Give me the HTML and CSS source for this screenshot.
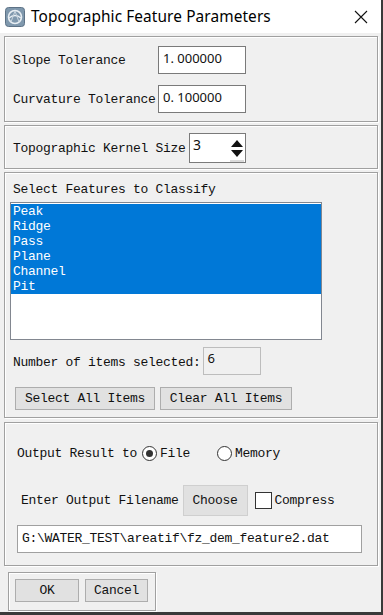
FILE: index.html
```html
<!DOCTYPE html>
<html lang="en">
<head>
  <meta charset="UTF-8" />
  <title>Topographic Feature Parameters</title>
  <link rel="stylesheet" href="styles.css">
</head>
<body>
  <div class="window">
    <div class="titlebar">
      <svg class="app-icon" width="20" height="20" viewBox="0 0 20 20">
        <rect x="0.5" y="0.5" width="19" height="19" rx="3" fill="#7f98ad" stroke="#5d7286"/>
        <circle cx="10" cy="10" r="6.5" fill="none" stroke="#e8eef3" stroke-width="1.6"/>
        <path d="M4 11 Q10 6 16 11" fill="none" stroke="#e8eef3" stroke-width="1.4"/>
        <path d="M6 15 L10 4 L14 15" fill="none" stroke="#c9d5df" stroke-width="1"/>
      </svg>
      <span class="title">Topographic Feature Parameters</span>
      <svg class="close" width="14" height="14" viewBox="0 0 14 14">
        <path d="M1 1 L13 13 M13 1 L1 13" stroke="#111" stroke-width="1.1"/>
      </svg>
    </div>

    <div class="panel tolerances">
      <label class="mono">Slope Tolerance</label>
      <div class="field num">1. 000000</div>
      <label class="mono">Curvature Tolerance</label>
      <div class="field num">0. 100000</div>
    </div>

    <div class="panel kernel">
      <label class="mono">Topographic Kernel Size</label>
      <div class="spinner">
        <span class="num">3</span>
        <svg width="14" height="26" viewBox="0 0 14 26">
          <path d="M1 11 L7 4 L13 11 Z" fill="#111"/>
          <path d="M1 14 L7 21 L13 14 Z" fill="#111"/>
          <path d="M0 25 L14 25" stroke="#b5b5b5"/>
        </svg>
      </div>
    </div>

    <div class="panel features">
      <div class="mono heading">Select Features to Classify</div>
      <div class="listbox">
        <div class="item mono">Peak</div>
        <div class="item mono">Ridge</div>
        <div class="item mono">Pass</div>
        <div class="item mono">Plane</div>
        <div class="item mono">Channel</div>
        <div class="item mono">Pit</div>
      </div>
      <div class="count-row">
        <label class="mono">Number of items selected:</label>
        <div class="count num">6</div>
      </div>
      <div class="btn-row">
        <button class="btn mono wide">Select All Items</button>
        <button class="btn mono">Clear All Items</button>
      </div>
    </div>

    <div class="panel output">
      <div class="out-row">
        <label class="mono">Output Result to</label>
        <span class="radio on"></span><span class="mono">File</span>
        <span class="radio memory"></span><span class="mono">Memory</span>
      </div>
      <div class="file-row">
        <label class="mono">Enter Output Filename</label>
        <button class="btn mono choose">Choose</button>
        <span class="check"></span><span class="mono">Compress</span>
      </div>
      <div class="field mono filename">G:\WATER_TEST\areatif\fz_dem_feature2.dat</div>
    </div>

    <div class="panel actions">
      <button class="btn mono ok">OK</button>
      <button class="btn mono cancel">Cancel</button>
    </div>
  </div>
</body>
</html>
```

FILE: styles.css
```css
* {
  box-sizing: border-box;
  margin: 0;
  padding: 0;
}

body {
  width: 383px;
  height: 615px;
  background: #3a3a3a;
  overflow: hidden;
}

.window {
  width: 381px;
  height: 612px;
  background: #f0f0f0;
  display: flex;
  flex-direction: column;
}

.mono {
  font-family: "Liberation Mono", monospace;
  font-size: 13px;
  letter-spacing: -0.3px;
  color: #111;
}

.num {
  font-family: "Noto Sans", sans-serif;
  font-size: 13px;
  color: #111;
}

.titlebar {
  height: 33px;
  background: #fff;
  display: flex;
  align-items: center;
  padding-left: 5px;
}

.app-icon {
  margin-top: 1px;
}

.title {
  font-family: "Noto Sans", sans-serif;
  font-size: 15.4px;
  letter-spacing: 0.1px;
  color: #000;
  margin-left: 6px;
  flex: 1;
}

.close {
  margin-right: 13px;
}

.panel {
  margin: 3px 3px 0 4px;
  border: 1px solid #a0a0a0;
  box-shadow: inset 1px 1px 0 #fff, 1px 1px 0 #fff;
}

.field {
  background: #fff;
  border: 1px solid #7a7a7a;
  height: 28px;
  padding: 2px 4px;
  line-height: 18px;
}

.tolerances {
  display: grid;
  grid-template-columns: 145px 88px;
  column-gap: 0;
  row-gap: 11px;
  align-items: center;
  padding: 9px 0 8px 8px;
}

.kernel {
  display: flex;
  align-items: center;
  padding: 7px 0 5px 8px;
}

.kernel label {
  width: 176px;
}

.spinner {
  width: 57px;
  height: 30px;
  background: #fff;
  border: 1px solid #7a7a7a;
  display: flex;
  justify-content: space-between;
  padding: 0 1px 0 3px;
}

.spinner .num {
  font-size: 14px;
  line-height: 22px;
}

.spinner svg {
  margin-top: 2px;
}

.features {
  padding: 9px 0 8px 5px;
  height: 246px;
}

.heading {
  margin-left: 3px;
  height: 20px;
}

.listbox {
  width: 312px;
  height: 138px;
  background: #fff;
  border: 1px solid #828790;
  padding-top: 1px;
}

.item {
  background: #0078d7;
  color: #fff;
  height: 15px;
  line-height: 16px;
  padding-left: 2px;
}

.count-row {
  display: flex;
  align-items: center;
  margin-top: 7px;
  padding-left: 3px;
}

.count-row label {
  margin-right: 2px;
  margin-top: 3px;
}

.count {
  width: 58px;
  height: 28px;
  border: 1px solid #bdbdbd;
  padding: 0 4px;
  line-height: 20px;
}

.btn-row {
  display: flex;
  gap: 5px;
  margin-top: 12px;
  padding-left: 5px;
}

.btn {
  background: #e1e1e1;
  border: 1px solid #adadad;
  height: 23px;
  cursor: pointer;
}

.btn.wide {
  width: 140px;
}

.btn-row .btn:last-child {
  width: 132px;
}

.output {
  margin-top: 4px;
  padding: 23px 0 12px 12px;
}

.out-row {
  display: flex;
  align-items: center;
}

.out-row label {
  margin-right: 5px;
}

.radio {
  width: 15px;
  height: 15px;
  border-radius: 50%;
  border: 1px solid #333;
  background: #fff;
  margin-right: 3px;
  position: relative;
}

.radio.on::after {
  content: "";
  position: absolute;
  left: 3px;
  top: 3px;
  width: 7px;
  height: 7px;
  border-radius: 50%;
  background: #333;
}

.radio.memory {
  margin-left: 27px;
}

.file-row {
  display: flex;
  align-items: center;
  margin-top: 24px;
  padding-left: 4px;
}

.file-row label {
  margin-right: 4px;
}

.choose {
  width: 65px;
  height: 31px;
  border-color: #cfcfcf;
  margin-right: 7px;
}

.check {
  width: 17px;
  height: 17px;
  border: 1px solid #333;
  background: #fff;
  margin-right: 3px;
}

.filename {
  width: 345px;
  margin-top: 9px;
  border-color: #a0a0a0;
  line-height: 22px;
}

.actions {
  width: 148px;
  margin-top: 6px;
  margin-left: 8px;
  display: flex;
  gap: 6px;
  padding: 6px 0 8px 6px;
}

.ok {
  width: 64px;
}

.cancel {
  width: 63px;
}
```
